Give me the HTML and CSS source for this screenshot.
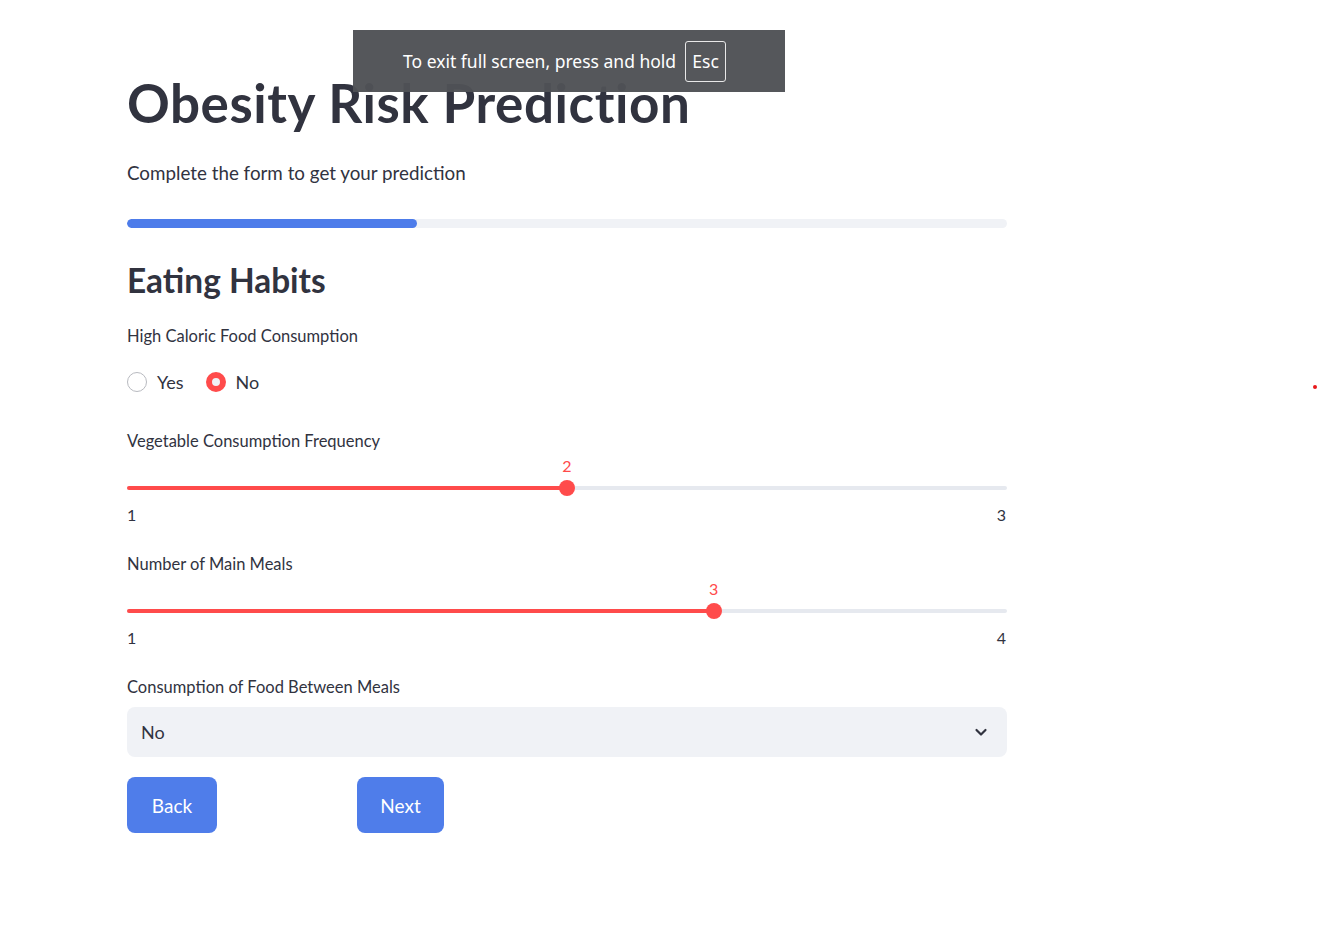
FILE: index.html
```html
<!DOCTYPE html>
<html>
<head>
<meta charset="utf-8">
<link rel="stylesheet" href="styles.css">
</head>
<body>
<main class="page">
  <h1 class="title">Obesity Risk Prediction</h1>
  <p class="subtitle">Complete the form to get your prediction</p>
  <div class="progress"><div class="progress-fill" style="width:33%"></div></div>
  <h2 class="section">Eating Habits</h2>

  <div class="field field-first">
    <div class="label">High Caloric Food Consumption</div>
    <div class="radios">
      <label class="radio"><span class="dot"></span>Yes</label>
      <label class="radio"><span class="dot checked"></span>No</label>
    </div>
  </div>

  <div class="field field-after-radio">
    <div class="label">Vegetable Consumption Frequency</div>
    <div class="slider">
      <div class="track">
        <div class="fill" style="width:50%"></div>
        <div class="thumb" style="left:50%"><span class="val">2</span></div>
      </div>
      <div class="ticks"><span>1</span><span>3</span></div>
    </div>
  </div>

  <div class="field">
    <div class="label">Number of Main Meals</div>
    <div class="slider">
      <div class="track">
        <div class="fill" style="width:66.67%"></div>
        <div class="thumb" style="left:66.67%"><span class="val">3</span></div>
      </div>
      <div class="ticks"><span>1</span><span>4</span></div>
    </div>
  </div>

  <div class="field">
    <div class="label">Consumption of Food Between Meals</div>
    <div class="select">
      <span>No</span>
      <svg class="chev" width="16" height="16" viewBox="0 0 16 16"><path d="M3.5 6 L8 10.5 L12.5 6" fill="none" stroke="#31333f" stroke-width="2.2" stroke-linecap="round" stroke-linejoin="round"/></svg>
    </div>
  </div>

  <div class="buttons">
    <button class="btn back">Back</button>
    <button class="btn next">Next</button>
  </div>
</main>

<div class="fs-toast">To exit full screen, press and hold <span class="key">Esc</span></div>
<div class="red-dot"></div>
</body>
</html>
```
FILE: styles.css
```css
* { box-sizing: border-box; }
html, body { margin: 0; padding: 0; background: #fff; }
body {
  font-family: "Lato", "Noto Sans", sans-serif;
  color: #31333f;
  width: 1319px;
  height: 927px;
  overflow: hidden;
  position: relative;
}
.page {
  width: 880px;
  margin-left: 127px;
  padding-top: 72px;
}
.title {
  margin: 0;
  font-size: 53px;
  font-weight: 700;
  line-height: 62px;
  letter-spacing: 0.55px;
}
.subtitle {
  margin: 26px 0 0;
  font-size: 18.8px;
  line-height: 26px;
}
.progress {
  margin-top: 33px;
  height: 9px;
  border-radius: 5px;
  background: #f0f2f6;
  overflow: hidden;
}
.progress-fill {
  height: 100%;
  background: #4d7cea;
  border-radius: 5px;
}
.section {
  margin: 32px 0 0;
  font-size: 33.4px;
  font-weight: 700;
  line-height: 40px;
}
.field { margin-top: 28px; }
.field-first { margin-top: 25px; }
.field-after-radio { margin-top: 36px; }
.label {
  font-size: 16.5px;
  line-height: 22px;
}
.radios {
  display: flex;
  gap: 22px;
  margin-top: 23px;
  height: 24px;
  align-items: center;
}
.radio {
  display: flex;
  align-items: center;
  gap: 10px;
  font-size: 18px;
}
.dot {
  width: 20px;
  height: 20px;
  border-radius: 50%;
  border: 1px solid #b8bac0;
  background: #fff;
}
.dot.checked {
  border: 6px solid #ff4b4b;
  background: #f0f2f6;
}
.slider { padding-top: 34px; }
.track {
  position: relative;
  height: 4px;
  border-radius: 2px;
  background: #e6e9ef;
}
.fill {
  height: 100%;
  background: #ff4b4b;
  border-radius: 2px;
}
.thumb {
  position: absolute;
  top: 50%;
  width: 16px;
  height: 16px;
  margin-left: -8px;
  margin-top: -8px;
  border-radius: 50%;
  background: #ff4b4b;
}
.val {
  position: absolute;
  bottom: 21px;
  left: 50%;
  transform: translateX(-50%);
  font-size: 16px;
  line-height: 18px;
  color: #ff4b4b;
}
.ticks {
  display: flex;
  justify-content: space-between;
  margin-top: 15px;
  padding-right: 1px;
  font-size: 16px;
  line-height: 20px;
}
.select {
  margin-top: 9px;
  height: 50px;
  background: #f0f2f6;
  border-radius: 8px;
  display: flex;
  align-items: center;
  justify-content: space-between;
  padding: 0 18px 0 14px;
  font-size: 18px;
}
.buttons {
  display: flex;
  gap: 140px;
  margin-top: 20px;
}
.btn {
  height: 56px;
  border: none;
  border-radius: 8px;
  background: #4f7dea;
  color: #fff;
  font-family: inherit;
  font-size: 19px;
  padding: 0 20px;
}
.back { width: 90px; }
.next { width: 87px; }

.fs-toast {
  position: absolute;
  left: 353px;
  top: 30px;
  width: 432px;
  height: 62px;
  background: rgba(80, 82, 86, 0.97);
  color: #fff;
  display: flex;
  align-items: center;
  gap: 9px;
  font-family: "Noto Sans", sans-serif;
  font-size: 17.5px;
  padding-left: 50px;
}
.key {
  border: 1px solid #e8e8e8;
  border-radius: 3px;
  width: 41px;
  text-align: center;
  height: 41px;
  line-height: 39px;
  display: inline-block;
}
.red-dot {
  position: absolute;
  left: 1313px;
  top: 385px;
  width: 4px;
  height: 4px;
  border-radius: 50%;
  background: #e8181b;
}
```
